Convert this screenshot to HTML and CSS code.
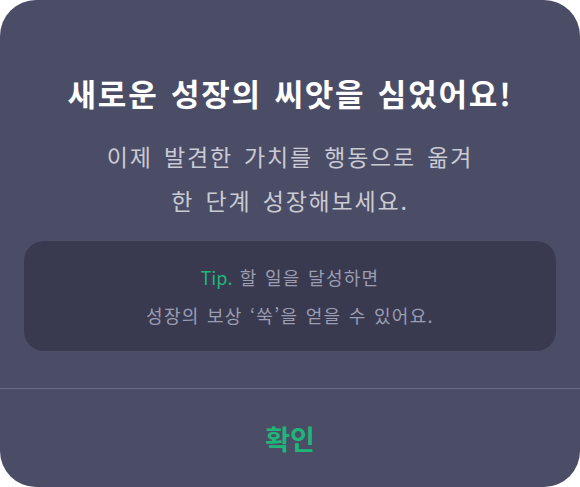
FILE: index.html
```html
<!DOCTYPE html>
<html lang="ko">
<head>
<meta charset="utf-8">
<link rel="stylesheet" href="styles.css">
</head>
<body>
<div class="dialog">
  <div class="content">
    <h1 class="title">새로운 성장의 씨앗을 심었어요!</h1>
    <p class="desc">이제 발견한 가치를 행동으로 옮겨<br>한 단계 성장해보세요.</p>
    <div class="tip">
      <p><span class="tip-label">Tip.</span> 할 일을 달성하면<br>성장의 보상 ‘쑥’을 얻을 수 있어요.</p>
    </div>
  </div>
  <div class="actions">
    <button class="confirm">확인</button>
  </div>
</div>
</body>
</html>
```
FILE: styles.css
```css
html, body {
  margin: 0;
  padding: 0;
  background: #ffffff;
}
body {
  font-family: "Noto Sans CJK KR", "Noto Sans", sans-serif;
}
.dialog {
  width: 580px;
  height: 487px;
  background: #4b4d66;
  border-radius: 36px;
  display: flex;
  flex-direction: column;
  overflow: hidden;
}
.content {
  padding: 71px 24px 37px;
  display: flex;
  flex-direction: column;
  align-items: center;
  border-bottom: 1px solid #696b82;
}
.title {
  margin: 0;
  font-size: 31px;
  line-height: 44px;
  font-weight: 700;
  letter-spacing: 1.8px;
  word-spacing: 2px;
  color: #ffffff;
  text-align: center;
}
.desc {
  margin: 19px 0 0;
  font-size: 23px;
  line-height: 44px;
  letter-spacing: 1.8px;
  word-spacing: 3px;
  color: #c9cad4;
  text-align: center;
}
.tip {
  margin-top: 19px;
  align-self: stretch;
  height: 110px;
  background: #393a50;
  border-radius: 20px;
  display: flex;
  align-items: center;
  justify-content: center;
}
.tip p {
  margin: 0;
  font-size: 18px;
  line-height: 38px;
  letter-spacing: 1.3px;
  word-spacing: 1px;
  color: #9c9db0;
  text-align: center;
}
.tip-label {
  color: #20b67a;
  letter-spacing: 0;
}
.actions {
  flex: 1;
  display: flex;
  align-items: center;
  justify-content: center;
}
.confirm {
  background: none;
  border: 0;
  padding: 0;
  font-family: inherit;
  font-size: 27px;
  font-weight: 700;
  color: #20b67a;
}
```
